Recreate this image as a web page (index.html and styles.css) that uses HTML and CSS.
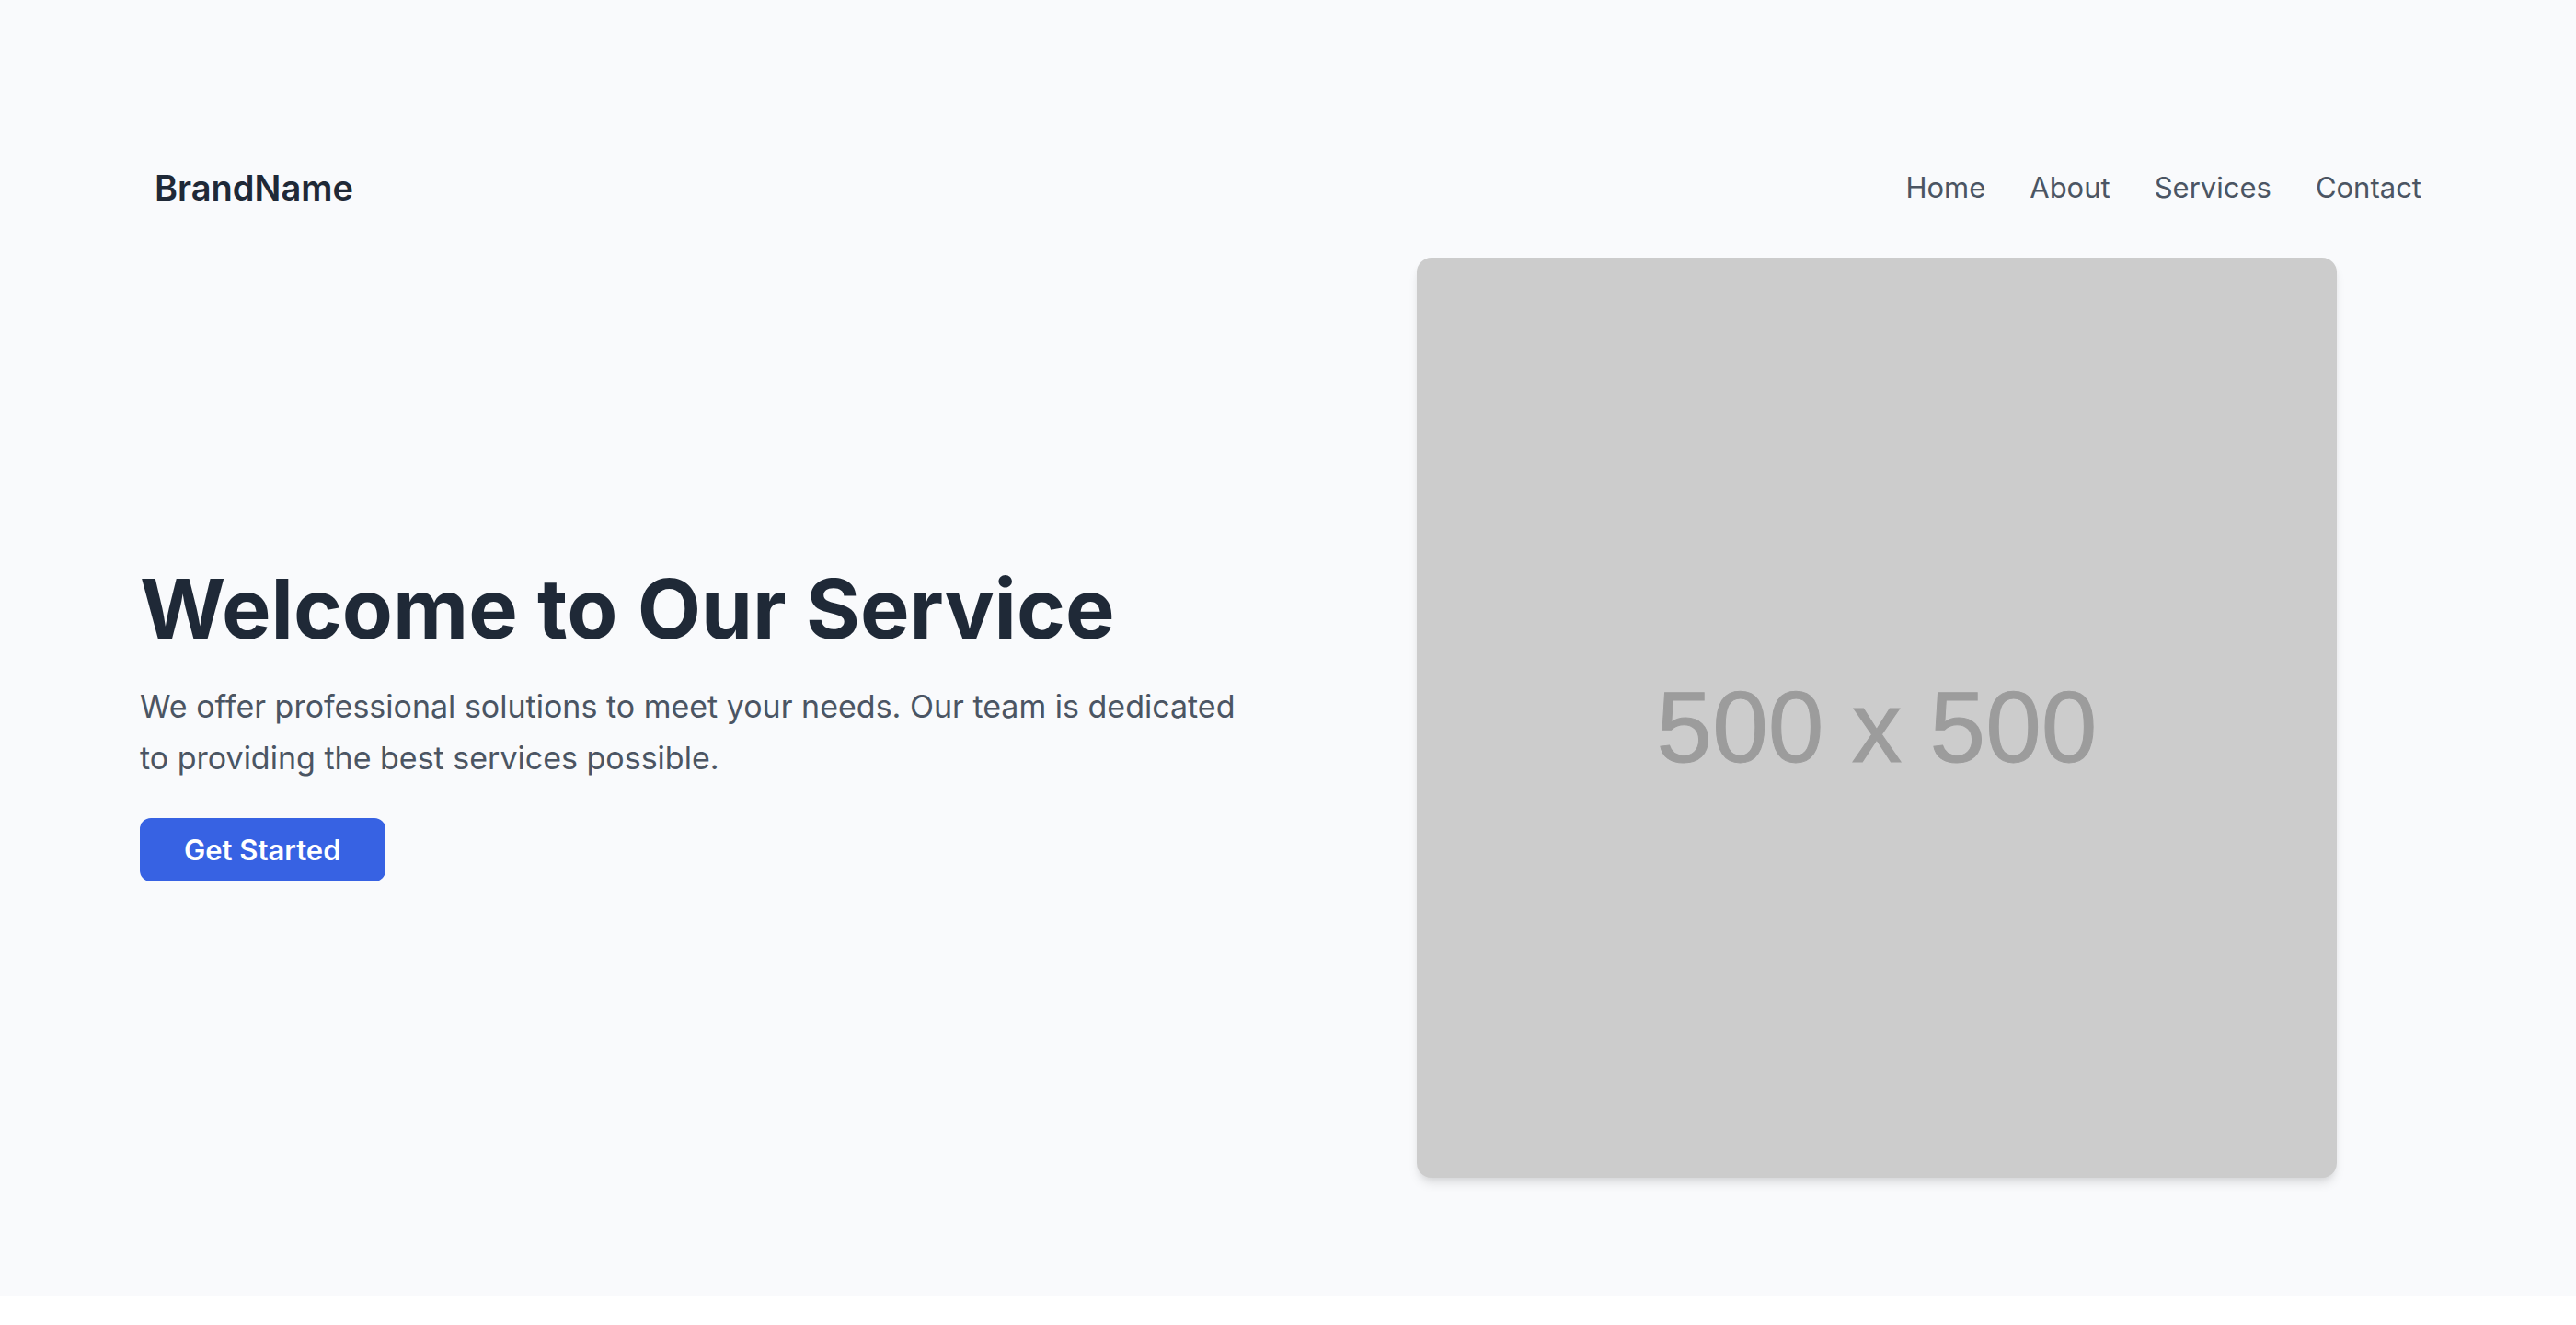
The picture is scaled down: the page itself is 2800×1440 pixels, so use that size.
FILE: index.html
```html
<!DOCTYPE html>
<html lang="en">
<head>
  <meta charset="utf-8">
  <meta name="viewport" content="width=device-width, initial-scale=1">
  <title>BrandName</title>
  <link rel="stylesheet" href="styles.css">
</head>
<body>
  <div class="page">
    <div class="container">
      <header class="header">
        <div class="brand">BrandName</div>
        <nav class="nav" aria-label="Main">
          <a href="#home">Home</a>
          <a href="#about">About</a>
          <a href="#services">Services</a>
          <a href="#contact">Contact</a>
        </nav>
      </header>
      <main class="hero">
        <div class="hero-text">
          <h1 class="title">Welcome to Our Service</h1>
          <p class="lead">We offer professional solutions to meet your needs. Our team is dedicated to providing the best services possible.</p>
          <div class="actions"><a class="button" href="#start">Get Started</a></div>
        </div>
        <div class="hero-media">
          <div class="placeholder">500 x 500</div>
        </div>
      </main>
    </div>
  </div>
</body>
</html>
```
FILE: styles.css
```css
* {
  box-sizing: border-box;
}

body {
  margin: 0;
  background: #ffffff;
  color: #1f2937;
  font-family: Inter, "Liberation Sans", sans-serif;
  font-size: 31px;
  line-height: 48px;
}

.page {
  padding: 128px 0;
  background: #f9fafc;
}

.container {
  max-width: 2560px;
  margin: 0 auto;
  padding: 0 32px;
}

.header {
  display: flex;
  align-items: center;
  justify-content: space-between;
  padding: 48px 16px;
}

.brand {
  font-size: 38px;
  font-weight: 600;
  line-height: 56px;
}

.nav {
  display: flex;
  gap: 48px;
}

.nav a {
  color: #4b5563;
  text-decoration: none;
}

.hero {
  display: grid;
  grid-template-columns: 1fr 1fr;
  align-items: center;
  gap: 64px;
}

.title {
  margin: 0 0 28px;
  font-size: 90px;
  font-weight: 700;
  line-height: 100px;
}

.lead {
  margin: 0 0 48px;
  color: #4b5563;
  font-size: 34px;
  line-height: 56px;
}

.button {
  padding: 16px 48px;
  border-radius: 12px;
  background: #3762e3;
  color: #ffffff;
  font-weight: 600;
  text-decoration: none;
}

.hero-media {
  display: flex;
  justify-content: center;
}

.placeholder {
  display: flex;
  align-items: center;
  justify-content: center;
  width: 100%;
  max-width: 1000px;
  aspect-ratio: 1;
  padding-top: 20px;
  border-radius: 16px;
  background: #cccccc;
  box-shadow: 0 8px 12px -2px rgba(0, 0, 0, 0.1), 0 4px 8px -4px rgba(0, 0, 0, 0.1);
  color: #9c9c9c;
  font-family: "Liberation Sans", Arial, sans-serif;
  font-size: 109px;
  line-height: 1;
  -webkit-text-stroke: 1px #9c9c9c;
}
```
